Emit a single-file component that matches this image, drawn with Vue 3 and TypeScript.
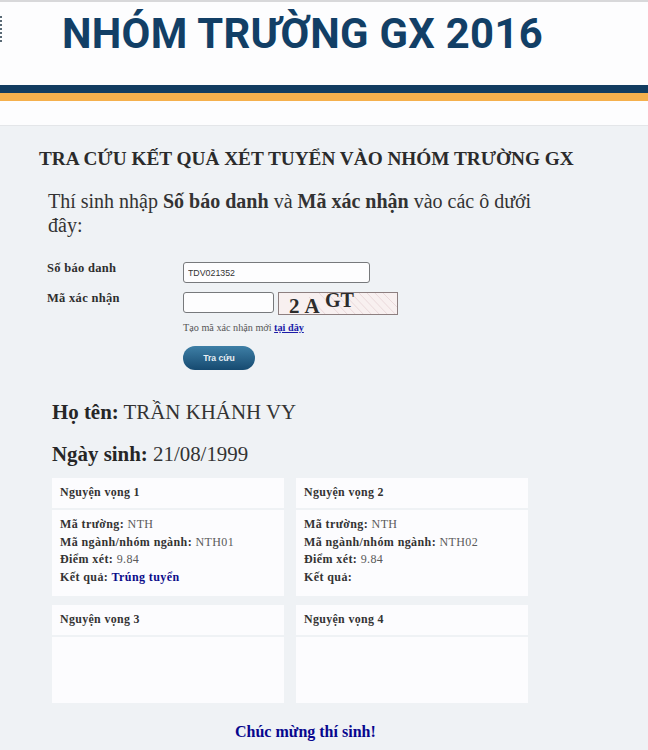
<script setup lang="ts">
interface Wish { title: string; school?: string; major?: string; score?: string; result?: string; filled: boolean }
const wishes: Wish[] = [
  { title: 'Nguyện vọng 1', school: 'NTH', major: 'NTH01', score: '9.84', result: 'Trúng tuyển', filled: true },
  { title: 'Nguyện vọng 2', school: 'NTH', major: 'NTH02', score: '9.84', result: '', filled: true },
  { title: 'Nguyện vọng 3', filled: false },
  { title: 'Nguyện vọng 4', filled: false },
]
</script>

<template>
  <div class="page">
    <header class="header">
      <div class="logo-sliver"></div>
      <h1 class="brand">NHÓM TRƯỜNG GX 2016</h1>
      <div class="bar-navy"></div>
      <div class="bar-gold"></div>
    </header>
    <main class="main">
      <h2 class="heading">TRA CỨU KẾT QUẢ XÉT TUYỂN VÀO NHÓM TRƯỜNG GX</h2>
      <p class="intro">Thí sinh nhập <b>Số báo danh</b> và <b>Mã xác nhận</b> vào các ô dưới đây:</p>
      <form class="form" @submit.prevent>
        <div class="row">
          <label class="label">Số báo danh</label>
          <input class="input wide" value="TDV021352" />
        </div>
        <div class="row row-captcha">
          <label class="label">Mã xác nhận</label>
          <input class="input short" />
          <div class="captcha">
            <svg class="captcha-noise" width="120" height="23" viewBox="0 0 120 23">
              <path d="M40 0L62 23M48 0L70 23M56 0L78 23M64 0L86 23M72 0L94 23M80 0L102 23M88 0L110 23M96 0L118 23M104 0L120 16M30 4L48 23" stroke="#ead9db" stroke-width="1" fill="none" />
            </svg>
            <span class="cap-a">2 A</span><span class="cap-b">GT</span>
          </div>
        </div>
        <div class="hint">Tạo mã xác nhận mới <a class="hint-link" href="#">tại đây</a></div>
        <button class="submit" type="button">Tra cứu</button>
      </form>
      <div class="person"><b>Họ tên:</b> TRẦN KHÁNH VY</div>
      <div class="person birth"><b>Ngày sinh:</b> 21/08/1999</div>
      <div class="grid">
        <section v-for="w in wishes" :key="w.title" class="card">
          <div class="card-head">{{ w.title }}</div>
          <div class="card-body">
            <template v-if="w.filled">
              <div><b>Mã trường:</b> {{ w.school }}</div>
              <div><b>Mã ngành/nhóm ngành:</b> {{ w.major }}</div>
              <div><b>Điểm xét:</b> {{ w.score }}</div>
              <div><b>Kết quả:</b> <b class="win">{{ w.result }}</b></div>
            </template>
          </div>
        </section>
      </div>
      <div class="congrats">Chúc mừng thí sinh!</div>
    </main>
  </div>
</template>

<style>
html, body { margin: 0; background: #eff2f5; }
</style>

<style scoped>
.page { width: 648px; height: 750px; overflow: hidden; background: #eff2f5; font-family: "Liberation Serif", serif; color: #2a2a2a; }
.header { position: relative; height: 126px; background: #fdfdfe; border-top: 2px solid #d8d8da; border-bottom: 1px solid #e4e6e9; box-sizing: border-box; padding-top: 83px; }
.logo-sliver { position: absolute; left: 0; top: 14px; width: 2px; height: 26px; background: repeating-linear-gradient(#5a6a76 0 2px, #fff 2px 4px); }
.brand { position: absolute; left: 62px; top: 7px; margin: 0; font: 700 41.8px/50px Roboto, sans-serif; color: #123f66; letter-spacing: 0.3px; white-space: nowrap; }
.bar-navy { height: 8px; background: #123c60; }
.bar-gold { height: 8px; background: #f5b04d; }
.main { padding: 22px 0 0 39px; }
.heading { margin: 0; font: 700 19.28px/22px "Liberation Serif", serif; color: #2b2b2b; white-space: nowrap; }
.intro { width: 500px; margin: 19px 0 0 9px; font-size: 20px; line-height: 24px; color: #333; }
.form { margin: 25px 0 0 8px; }
.row { display: flex; align-items: flex-start; }
.row-captcha { margin-top: 9px; }
.label { width: 136px; font-weight: 700; font-size: 12.5px; line-height: 13px; letter-spacing: 0.3px; color: #2e2e2e; }
.input { box-sizing: border-box; height: 21px; padding: 0 4px; border: 1px solid #77797c; border-radius: 3px; background: #fdfdfe; font: 8.8px "Liberation Sans", sans-serif; color: #333; outline: none; }
.wide { width: 187px; }
.short { width: 91px; }
.captcha { position: relative; box-sizing: border-box; width: 120px; height: 23px; margin-left: 4px; border: 1px solid #8d7f80; background: #f8f0f0; overflow: hidden; font-family: "Liberation Serif", serif; font-weight: 700; color: #2c2c2c; }
.captcha-noise { position: absolute; left: 0; top: 0; }
.cap-a { position: absolute; left: 10px; top: 2px; font-size: 21px; line-height: 22px; letter-spacing: 0.5px; white-space: nowrap; }
.cap-b { position: absolute; left: 46px; top: -4px; font-size: 20px; line-height: 22px; white-space: nowrap; }
.hint { margin: 6px 0 0 136px; font-size: 10.2px; line-height: 14px; color: #555; }
.hint-link { color: #1c1ca8; font-weight: 700; }
.submit { display: block; width: 72px; height: 24px; margin: 11px 0 0 136px; border: 0; border-radius: 12px; background: linear-gradient(#3e7fa6, #164a70); color: #e9eff4; font: 700 8.6px "Liberation Sans", sans-serif; padding: 0; }
.person { margin: 30px 0 0 13px; font-size: 20.9px; line-height: 24px; color: #333; }
.person b { color: #262626; }
.birth { margin-top: 18px; }
.grid { display: grid; grid-template-columns: 232px 232px; gap: 9px 12px; margin: 12px 0 0 13px; }
.card-head { height: 30px; padding-left: 8px; background: #fcfcfe; font-weight: 700; font-size: 11.9px; line-height: 29px; letter-spacing: 0.35px; color: #333; margin-bottom: 2px; }
.card-body { box-sizing: border-box; height: 86px; padding: 6px 8px; background: #fcfcfe; font-size: 12px; line-height: 17.7px; letter-spacing: 0.4px; color: #5a5a5a; }
.card-body b { color: #333; }
.card-body b.win { color: #0b0b8a; }
.card:nth-child(n+3) .card-body { height: 66px; }
.congrats { margin: 20px 0 0 196px; font-weight: 700; font-size: 16px; line-height: 18px; color: #07078e; }
</style>
